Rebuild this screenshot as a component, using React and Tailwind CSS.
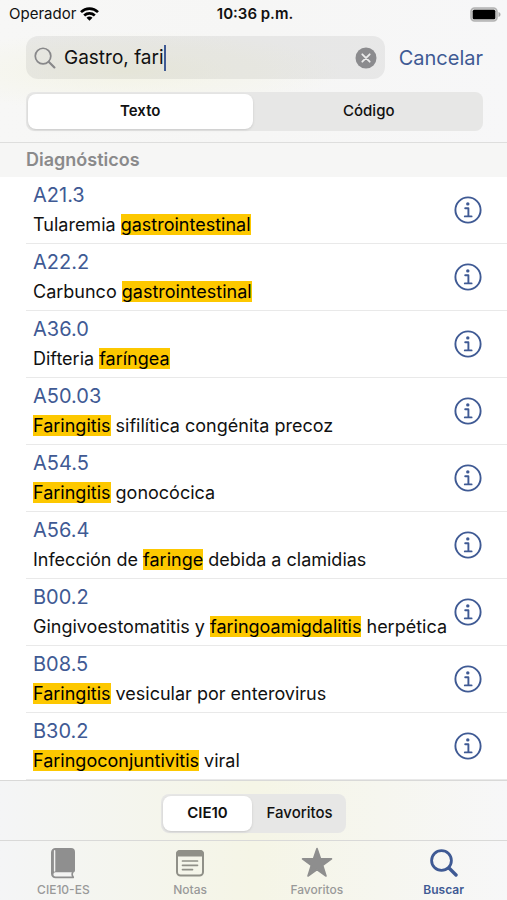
import React, { useState } from 'react';

const RESULTS = [
  { code: 'A21.3', parts: ['Tularemia ', 'gastrointestinal', ''] },
  { code: 'A22.2', parts: ['Carbunco ', 'gastrointestinal', ''] },
  { code: 'A36.0', parts: ['Difteria ', 'faríngea', ''] },
  { code: 'A50.03', parts: ['', 'Faringitis', ' sifilítica congénita precoz'] },
  { code: 'A54.5', parts: ['', 'Faringitis', ' gonocócica'] },
  { code: 'A56.4', parts: ['Infección de ', 'faringe', ' debida a clamidias'] },
  { code: 'B00.2', parts: ['Gingivoestomatitis y ', 'faringoamigdalitis', ' herpética'] },
  { code: 'B08.5', parts: ['', 'Faringitis', ' vesicular por enterovirus'] },
  { code: 'B30.2', parts: ['', 'Faringoconjuntivitis', ' viral'] },
];

const WifiIcon = () => (
  <svg width="19" height="14" viewBox="0 0 19 14" fill="none" stroke="#000" strokeWidth="2.7">
    <path d="M1 5.1C5.8.5 13.2.5 18 5.1" />
    <path d="M4.2 8.4c3-2.8 7.6-2.8 10.6 0" />
    <path d="M9.5 13.8 6.5 10.7c1.7-1.6 4.3-1.6 6 0z" fill="#000" stroke="none" />
  </svg>
);

const BatteryIcon = () => (
  <svg width="31" height="15" viewBox="0 0 31 15">
    <rect x="1" y="1" width="26" height="13" rx="3.5" fill="#d5d5d5" stroke="#b3b3b3" strokeWidth="1.6" />
    <rect x="2.7" y="2.7" width="22.6" height="9.6" rx="1.5" fill="#000" />
    <path d="M28.5 5c1.6.6 2 1.6 2 2.5s-.4 1.9-2 2.5z" fill="#aaa" />
  </svg>
);

const SearchIcon = ({ size, width }) => (
  <svg width={size} height={size} viewBox="0 0 28 28" fill="none" stroke="currentColor" strokeLinecap="round">
    <circle cx="11.5" cy="11.5" r="9.9" strokeWidth={width} />
    <path d="M19 19l7 7" strokeWidth={width + 0.6} />
  </svg>
);

const ClearIcon = () => (
  <svg width="22" height="22" viewBox="0 0 22 22">
    <circle cx="11" cy="11" r="10.5" fill="#8b8b8e" />
    <path d="M7.3 7.3l7.4 7.4M14.7 7.3l-7.4 7.4" stroke="#ececec" strokeWidth="1.8" strokeLinecap="round" />
  </svg>
);

const InfoIcon = () => (
  <svg width="28" height="28" viewBox="0 0 28 28" fill="none" stroke="currentColor">
    <circle cx="14" cy="14" r="12.6" strokeWidth="1.9" />
    <circle cx="13.8" cy="7.9" r="1.7" fill="currentColor" stroke="none" />
    <path d="M11.2 12.2h3.2v8M10.8 20.4h6.8" strokeWidth="1.9" strokeLinecap="round" strokeLinejoin="round" />
  </svg>
);

const BookIcon = () => (
  <svg width="26" height="32" viewBox="0 0 26 32">
    <path d="M5.5 1H21a4 4 0 0 1 4 4v18.5a2 2 0 0 1-1.5 2c-.7 1.3-.7 2.8.3 4a1 1 0 0 1-.8 1.700H5.500A4.500 4.500 0 0 1 1 26.700V5.500A4.500 4.500 0 0 1 5.500 1z" fill="#8f8f8f" />
    <path d="M4.6 3.8V24" stroke="#f1f1f0" strokeWidth="1.4" strokeLinecap="round" />
    <path d="M5.5 25.3h16.3c-.6 1.4-.6 2.8.1 4.200H5.500a2.100 2.100 0 0 1 0-4.200z" fill="#f4f4f3" />
  </svg>
);

const NotesIcon = () => (
  <svg width="30" height="32" viewBox="0 0 30 32" fill="none" stroke="#909088">
    <rect x="2" y="4" width="26" height="24.5" rx="3.5" strokeWidth="2" />
    <path d="M1 9.5V7a4 4 0 0 1 4-4h20a4 4 0 0 1 4 4v2.5z" fill="#909088" stroke="none" />
    <path d="M7.5 14h15M7.5 18.3h15M7.5 22.6h10" strokeWidth="1.7" strokeLinecap="round" />
  </svg>
);

const StarIcon = () => (
  <svg width="32" height="32" viewBox="0 0 32 32" fill="#8e8e8e" stroke="#8e8e8e" strokeWidth="1.6" strokeLinejoin="round">
    <path d="M16 1.5l3.5 10.3 11 .1-8.8 6.5L25 29l-9-6.400L7 29l3.300-10.600-8.800-6.500 11-.1z" />
  </svg>
);

const TABS = [
  { label: 'CIE10-ES', icon: <BookIcon /> },
  { label: 'Notas', icon: <NotesIcon /> },
  { label: 'Favoritos', icon: <StarIcon /> },
  { label: 'Buscar', icon: <SearchIcon size={28} width={2.8} /> },
];

const Segmented = ({ options, value, onChange }) => (
  <div className="grid auto-cols-fr grid-flow-col gap-1 rounded-lg bg-[#e7e7e6] p-0.5">
    {options.map((option) => (
      <button
        key={option}
        type="button"
        aria-pressed={option === value}
        onClick={() => onChange(option)}
        className={
          option === value
            ? 'h-[35px] rounded-lg bg-white px-[11px] text-[15px] font-semibold shadow'
            : 'h-[35px] rounded-lg px-[11px] text-[15px] font-medium'
        }
      >
        {option}
      </button>
    ))}
  </div>
);

const ResultRow = ({ code, parts }) => (
  <li className="ml-[26px] flex h-[67px] items-center border-b border-[#e9e9e9] pr-[25px] pl-[7px]">
    <div className="flex-1 pb-0.5 whitespace-nowrap">
      <a href={'#' + code} className="block text-xl leading-8 text-[#3f5a94]">{code}</a>
      <p className="text-lg leading-7">
        {parts[0]}
        <mark className="bg-[#fdc800] text-black">{parts[1]}</mark>
        {parts[2]}
      </p>
    </div>
    <button type="button" aria-label={'Información ' + code} className="text-[#3f5a94]">
      <InfoIcon />
    </button>
  </li>
);

const App = () => {
  const [query, setQuery] = useState('Gastro, fari');
  const [mode, setMode] = useState('Texto');
  const [scope, setScope] = useState('CIE10');
  const [tab, setTab] = useState('Buscar');

  return (
    <div className="flex min-h-screen flex-col bg-white font-['Inter',sans-serif] text-[#111]">
      <header className="border-b border-[#dededd] bg-linear-to-r from-[#f7f7f6] via-[#f6f6f5] to-[#f7f7f8]">
        <div className="bg-radial-[at_25%_50%] from-[#f4f4e6] to-transparent to-40%">
          <div className="grid h-7 grid-cols-3 items-center pr-1.5 pl-[9px] text-[15px]">
            <span className="flex items-center gap-1">Operador <WifiIcon /></span>
            <span className="text-center font-semibold">10:36 p.m.</span>
            <span className="flex justify-end"><BatteryIcon /></span>
          </div>
          <div className="flex items-center gap-3.5 pt-2 pr-6 pl-[26px]">
            <div className="flex h-[43px] flex-1 items-center rounded-xl bg-black/6 px-2">
              <label htmlFor="search" className="mr-2 text-[#88888a]" aria-label="Buscar">
                <SearchIcon size={22} width={2.2} />
              </label>
              <input
                id="search"
                type="text"
                value={query}
                onChange={(e) => setQuery(e.target.value)}
                className="field-sizing-content bg-transparent pt-0.5 text-[19px] caret-transparent outline-none"
              />
              <span className="h-[26px] w-0.5 bg-[#3f5a94]" />
              <button type="button" aria-label="Borrar" className="ml-auto" onClick={() => setQuery('')}>
                <ClearIcon />
              </button>
            </div>
            <button type="button" className="text-xl text-[#3f5a94]">Cancelar</button>
          </div>
          <div className="pt-[13px] pr-6 pb-[11px] pl-[26px]">
            <Segmented options={['Texto', 'Código']} value={mode} onChange={setMode} />
          </div>
        </div>
      </header>

      <main className="flex-1">
        <h2 className="h-[34px] bg-[#f6f6f5] pl-[26px] text-lg leading-[34px] font-semibold text-[#8a8a8b]">
          Diagnósticos
        </h2>
        <ul>
          {RESULTS.map((item) => (
            <ResultRow key={item.code} code={item.code} parts={item.parts} />
          ))}
        </ul>
      </main>

      <footer className="bg-linear-to-r from-[#f4f5f6] via-[#f5f5e6] to-[#f7f7f8]">
        <div className="flex h-[61px] items-center justify-center border-y border-[#d9d9d8] pt-1.5">
          <Segmented options={['CIE10', 'Favoritos']} value={scope} onChange={setScope} />
        </div>
        <nav className="grid grid-cols-4">
          {TABS.map(({ label, icon }) => (
            <button
              key={label}
              type="button"
              onClick={() => setTab(label)}
              className={
                label === tab
                  ? 'flex h-[59px] flex-col items-center pt-[5px] text-xs leading-5 font-semibold text-[#3f5a94]'
                  : 'flex h-[59px] flex-col items-center pt-[5px] text-xs leading-5 font-medium text-[#999]'
              }
            >
              <span className="flex h-[34px] shrink-0 items-center">{icon}</span>
              <span>{label}</span>
            </button>
          ))}
        </nav>
      </footer>
    </div>
  );
};

export default App;
